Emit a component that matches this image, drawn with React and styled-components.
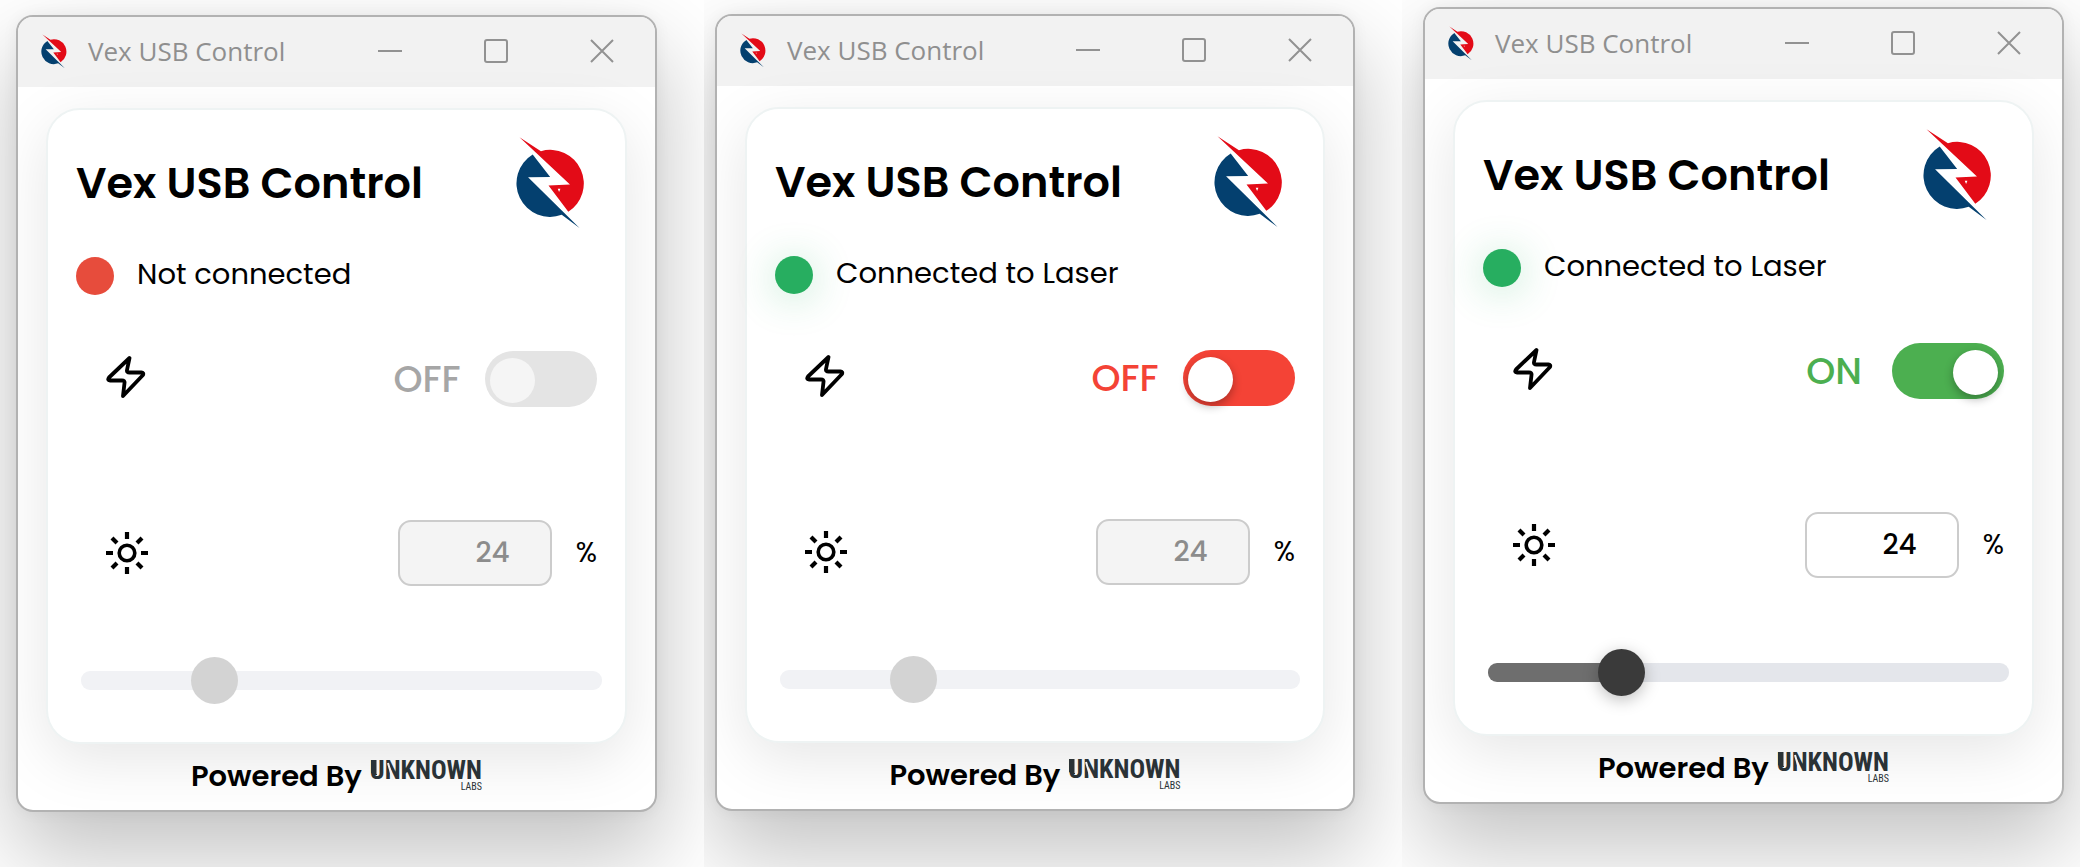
import { useState } from 'react';
import styled, { createGlobalStyle } from 'styled-components';

const devices = [
  { id: 'idle', connected: false, on: false, pad: '15px 47px 56px 16px' },
  { id: 'ready', connected: true, on: false, pad: '14px 47px 57px 11px' },
  { id: 'live', connected: true, on: true, pad: '7px 16px 64px 21px' },
];

const VexLogo = ({ width, height }) => (
  <svg width={width} height={height} viewBox='70 47 220 285' aria-hidden='true'>
    <path
      fill='#e30b17'
      d='M86 51 L151 93 A102 102 0 0 1 234 277 L174 197 L239 194 Z'
    />
    <path
      fill='#04406f'
      d='M126 103 L179 171 L112 172 L268 326 L214 286 A102 102 0 0 1 126 103 Z'
    />
    <path fill='#fff' d='M202 207 h8 l-4 10 z' />
  </svg>
);

const BoltIcon = () => (
  <svg width='40' height='44' viewBox='0 0 40 44' aria-hidden='true'>
    <path
      fill='none'
      stroke='#000'
      strokeWidth='3.8'
      strokeLinejoin='round'
      d='M23.5 3 L3 22.5 Q1 25.5 4 25.5 H16 Q19 25.5 18.5 28 L17 41 L37 20 Q38 17.5 35.5 17.5 H23.5 Q20.5 17.5 21 15 Z'
    />
  </svg>
);

const SunIcon = () => (
  <svg width='42' height='42' viewBox='0 0 42 42' aria-hidden='true'>
    <g fill='none' stroke='#000'>
      <circle cx='21' cy='21' r='7.8' strokeWidth='3.6' />
      <path
        strokeWidth='4.2'
        d='M21 0v7M21 35v7M0 21h7M35 21h7M6 6l5 5M31 31l5 5M6 36l5-5M31 11l5-5'
      />
    </g>
  </svg>
);

const DeviceWindow = ({ id, connected, on }) => {
  const [active, setActive] = useState(on);
  const [power, setPower] = useState(24);
  const handlePower = (e) => setPower(e.target.value);
  const locked = !connected || !active;

  return (
    <Window>
      <TitleBar>
        <VexLogo width={28} height={35} />
        <AppName>Vex USB Control</AppName>
        <WindowButton type='button' aria-label='Minimize'>
          <svg width='24' height='24' viewBox='0 0 24 24'>
            <path d='M0 12h24' />
          </svg>
        </WindowButton>
        <WindowButton type='button' aria-label='Maximize'>
          <svg width='24' height='24' viewBox='0 0 24 24'>
            <rect x='1' y='1' width='22' height='22' rx='2' />
          </svg>
        </WindowButton>
        <WindowButton type='button' aria-label='Close'>
          <svg width='24' height='24' viewBox='0 0 24 24'>
            <path d='M1 1l22 22M23 1L1 23' />
          </svg>
        </WindowButton>
      </TitleBar>

      <Body>
        <Card>
          <CardHeader>
            <Title>Vex USB Control</Title>
            <VexLogo width={73} height={94} />
          </CardHeader>

          <Status>
            <Dot $connected={connected} />
            {connected ? 'Connected to Laser' : 'Not connected'}
          </Status>

          {/* POWER */}
          <PowerRow>
            <BoltIcon />
            <SwitchLabel
              htmlFor={`switch-${id}`}
              $connected={connected}
              $active={active}
            >
              {active ? 'ON' : 'OFF'}
            </SwitchLabel>
            <Switch
              id={`switch-${id}`}
              type='checkbox'
              checked={active}
              disabled={!connected}
              onChange={(e) => setActive(e.target.checked)}
            />
          </PowerRow>

          {/* BRIGHTNESS */}
          <BrightnessRow>
            <SunIcon />
            <NumberInput
              id={`power-${id}`}
              type='number'
              min='1'
              max='100'
              value={power}
              disabled={locked}
              onChange={handlePower}
            />
            <label htmlFor={`power-${id}`}>%</label>
          </BrightnessRow>

          <Slider
            type='range'
            aria-label='Brightness'
            min='1'
            max='100'
            value={power}
            disabled={locked}
            onChange={handlePower}
            style={{ '--fill': `${power}%` }}
          />
        </Card>

        <Footer>
          Powered By
          <Brand>
            UNKNOWN
            <small>LABS</small>
            <svg width='32' height='20' viewBox='0 0 32 20' aria-hidden='true'>
              <path fill='#2a3236' d='M1 0h6v15H4L1 13z' />
              <path stroke='#f4f4f4' strokeWidth='2' d='M7.5 0v14M18 3l5 17' />
            </svg>
          </Brand>
        </Footer>
      </Body>
    </Window>
  );
};

const App = () => {
  return (
    <>
      <GlobalStyle />
      <Gallery>
        {devices.map(({ pad, ...device }) => (
          <Pane key={device.id} $pad={pad}>
            <DeviceWindow {...device} />
          </Pane>
        ))}
      </Gallery>
    </>
  );
};

const GlobalStyle = createGlobalStyle`
  * {
    box-sizing: border-box;
  }
  body {
    margin: 0;
    background: #fff;
    color: #000;
    font-family: Poppins, Inter, 'Liberation Sans', sans-serif;
    font-size: 28px;
  }
`;

const Gallery = styled.main`
  display: grid;
  grid-template-columns: 704fr 698fr 678fr;
`;

const Pane = styled.section`
  min-width: 0;
  overflow: hidden;
  padding: ${({ $pad }) => $pad};
`;

const Window = styled.article`
  overflow: hidden;
  border: 2px solid #b2b2b2;
  border-radius: 17px;
  background: #fff;
  box-shadow: 0 40px 90px 4px rgba(0, 0, 0, 0.24),
    0 0 16px rgba(0, 0, 0, 0.05);
`;

const TitleBar = styled.header`
  display: flex;
  align-items: center;
  height: 70px;
  padding: 0 0 2px 22px;
  background: #f2f2f2;
`;

const AppName = styled.span`
  flex: 1;
  padding-left: 20px;
  font-family: 'Segoe UI', 'Open Sans', sans-serif;
  font-size: 26px;
  line-height: 36px;
  color: #8f8f8f;
  white-space: nowrap;
`;

const WindowButton = styled.button`
  display: grid;
  place-items: center;
  width: 106px;
  height: 100%;
  padding: 0;
  border: 0;
  background: none;
  svg {
    fill: none;
    stroke: #929292;
    stroke-width: 2;
  }
`;

const Body = styled.div`
  padding: 21px 28px 0;
`;

const Card = styled.section`
  padding: 26px 28px 38px;
  border: 2px solid #eef3f3;
  border-radius: 34px;
  background: #fff;
  box-shadow: 0 16px 60px rgba(0, 0, 0, 0.1);
`;

const CardHeader = styled.header`
  display: flex;
  align-items: center;
  justify-content: space-between;
  padding-right: 10px;
`;

const Title = styled.h1`
  margin: 0;
  font-size: 43px;
  line-height: 60px;
  font-weight: 600;
  white-space: nowrap;
`;

const Status = styled.p`
  display: flex;
  align-items: flex-start;
  gap: 23px;
  margin: 27px 0 0;
  font-size: 29px;
  line-height: 34px;
`;

const Dot = styled.span`
  width: 38px;
  height: 38px;
  border-radius: 50%;
  background: ${({ $connected }) => ($connected ? '#27ae60' : '#e74c3c')};
  box-shadow: ${({ $connected }) =>
    $connected ? '0 4px 40px rgba(39, 174, 96, 0.3)' : 'none'};
`;

const Row = styled.div`
  display: flex;
  align-items: center;
  padding-left: 30px;
  svg {
    margin-right: auto;
  }
`;

const PowerRow = styled(Row)`
  margin-top: 56px;
  svg {
    margin-bottom: 4px;
  }
`;

const BrightnessRow = styled(Row)`
  gap: 24px;
  margin-top: 113px;
`;

const SwitchLabel = styled.label`
  min-width: 70px;
  margin-right: 23px;
  font-size: 37px;
  line-height: 54px;
  font-weight: 500;
  text-align: center;
  color: ${({ $connected, $active }) =>
    !$connected ? '#a6a6a6' : $active ? '#4caf50' : '#f44336'};
`;

const Switch = styled.input`
  appearance: none;
  width: 112px;
  height: 56px;
  margin: 0;
  padding: 7px 5px;
  border-radius: 28px;
  background: #f44336;
  &::before {
    content: '';
    display: block;
    width: 45px;
    height: 45px;
    border-radius: 50%;
    background: #fff;
    box-shadow: 0 4px 10px rgba(0, 0, 0, 0.3);
  }
  &:checked {
    background: #4caf50;
  }
  &:checked::before {
    margin-left: 56px;
  }
  &:disabled {
    background: #e4e4e4;
  }
  &:disabled::before {
    background: #f5f5f5;
    box-shadow: none;
  }
`;

const NumberInput = styled.input`
  appearance: textfield;
  width: 154px;
  height: 66px;
  padding: 0 40px 0 14px;
  border: 2px solid #ccc;
  border-radius: 13px;
  background: #fff;
  color: #000;
  font: inherit;
  font-weight: 500;
  text-align: right;
  &:disabled {
    background: #f4f4f4;
    color: #8c8c8c;
  }
  &::-webkit-inner-spin-button {
    appearance: none;
    margin: 0;
  }
`;

const Slider = styled.input`
  appearance: none;
  display: block;
  width: 100%;
  height: 48px;
  margin: 70px -5px 0 5px;
  background: none;
  &::-webkit-slider-runnable-track {
    height: 19px;
    border-radius: 9px;
    background: linear-gradient(
      to right,
      #6e6e6e var(--fill),
      #e4e6eb var(--fill)
    );
  }
  &::-webkit-slider-thumb {
    appearance: none;
    width: 47px;
    height: 47px;
    margin-top: -14px;
    border-radius: 50%;
    background: #3a3a3a;
    box-shadow: 0 4px 16px rgba(0, 0, 0, 0.25);
  }
  &:disabled::-webkit-slider-runnable-track {
    background: #f1f2f5;
  }
  &:disabled::-webkit-slider-thumb {
    background: #d3d3d3;
    box-shadow: none;
  }
`;

const Footer = styled.footer`
  display: flex;
  justify-content: center;
  gap: 8px;
  height: 66px;
  padding-top: 13px;
  font-size: 29px;
  font-weight: 600;
  line-height: 38px;
`;

const Brand = styled.a.attrs({ href: '#' })`
  position: relative;
  display: flex;
  flex-direction: column;
  color: #2a3236;
  font-family: 'Liberation Sans Narrow', 'Roboto Condensed', sans-serif;
  font-size: 26px;
  line-height: 26px;
  font-weight: 700;
  text-decoration: none;
  small {
    align-self: flex-end;
    font-size: 10px;
    line-height: 8px;
    font-weight: 400;
  }
  svg {
    position: absolute;
    top: 3px;
    left: 0;
  }
`;

export default App;
